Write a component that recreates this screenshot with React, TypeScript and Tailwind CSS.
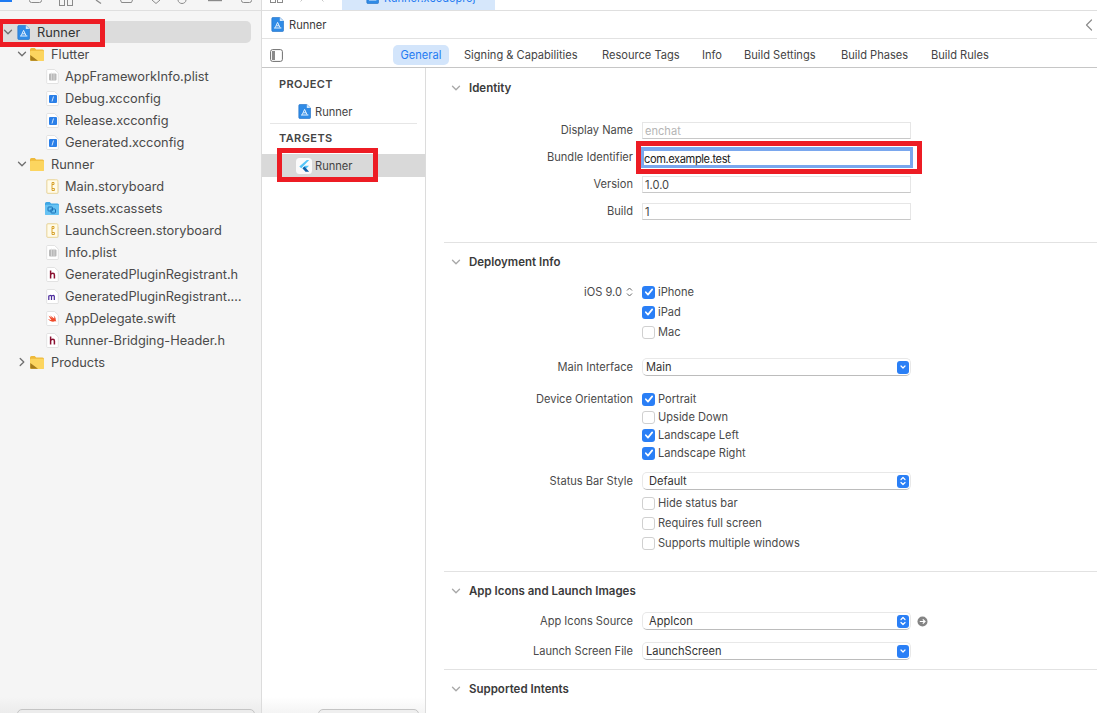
import React from "react";

const Chevron = ({ open = true, className = "" }: { open?: boolean; className?: string }) => (
  <svg width="10" height="10" viewBox="0 0 10 10" fill="none" className={className}>
    {open ? (
      <path d="M1.500 3.200 5 6.800 8.500 3.200" stroke="#6f6f6f" strokeWidth="1.300" strokeLinecap="round" strokeLinejoin="round" />
    ) : (
      <path d="M3.200 1.500 6.800 5 3.200 8.500" stroke="#6f6f6f" strokeWidth="1.300" strokeLinecap="round" strokeLinejoin="round" />
    )}
  </svg>
);

const Folder = ({ alias = false, blue = false }: { alias?: boolean; blue?: boolean }) => (
  <svg width="16" height="15" viewBox="0 0 16 15">
    <path d="M1 2.500A1.500 1.500 0 0 1 2.500 1h3.200L7.200 2.500h6.300A1.500 1.500 0 0 1 15 4v8.500a1.500 1.500 0 0 1-1.500 1.500h-11A1.500 1.500 0 0 1 1 12.500z" fill={blue ? "#3fa6e4" : "#eeb93a"} />
    <rect x="1" y="3.800" width="14" height="10.200" rx="1.400" fill={blue ? "#66c2f3" : "#fcd55f"} />
    {alias && <path d="M1.300 8 9 13.800H2.400a1.100 1.100 0 0 1-1.100-1.100z" fill="#a57b1b" />}
    {blue && (
      <g fill="none" stroke="#1a6fb5" strokeWidth="1">
        <rect x="4" y="6" width="4.500" height="4" rx="0.700" />
        <rect x="7" y="8" width="4.500" height="4" rx="0.700" />
      </g>
    )}
  </svg>
);

const Doc = ({ children }: { children?: React.ReactNode }) => (
  <svg width="13" height="15" viewBox="0 0 13 15">
    <path d="M.7 1.500a1 1 0 0 1 1-1h6.800l3.800 3.600v9.400a1 1 0 0 1-1 1H1.700a1 1 0 0 1-1-1z" fill="#fff" stroke="#dcdcdc" strokeWidth="0.800" />
    {children}
  </svg>
);

const Plist = () => (
  <Doc>
    <rect x="3" y="4.500" width="7.500" height="7" rx="1" fill="#b9b9b9" />
    <path d="M5.500 3.500v8M8 3.500v8" stroke="#e2e2e2" strokeWidth="0.700" />
  </Doc>
);
const Config = () => (
  <Doc>
    <rect x="3" y="4" width="8" height="8" rx="1" fill="#2a7fe8" />
    <path d="M7.500 5.500 6 10.500" stroke="#d4e6fb" strokeWidth="1" />
  </Doc>
);
const Story = () => (
  <Doc>
    <rect x="0.900" y="0.800" width="11" height="13.500" rx="1" fill="#fffbe9" stroke="#ecd284" strokeWidth="0.800" />
    <path d="M6 3.500h2v2H6zM6 5.500v4M6 9.500h2.400v2H6z" fill="none" stroke="#d49a1c" strokeWidth="0.900" />
  </Doc>
);
const Header = () => (
  <Doc>
    <path d="M4.600 3.500v8M4.600 7.600c.6-1 1.400-1.300 2.200-1.300 1 0 1.600.6 1.600 1.700v3.500" fill="none" stroke="#8b1030" strokeWidth="1.500" />
  </Doc>
);
const Impl = () => (
  <Doc>
    <path d="M2.800 11V6.400M2.800 7.300c.6-1 2.400-1.200 2.700 0V11M5.500 7.300c.6-1 2.500-1.200 2.800 0V11" fill="none" stroke="#4a2a9c" strokeWidth="1.200" />
  </Doc>
);
const Swift = () => (
  <Doc>
    <path d="M2.500 4.500c1.600 1.400 3 2.400 4.400 3.300C5.500 6.400 4.500 5.200 3.900 4.200c1.600 1.300 3.400 2.600 4.400 3.200.2-.9-.1-2-.8-3 1.700 1.200 2.600 3.200 2.200 4.600.5.700.6 1.200.5 1.700-.4-.5-.9-.6-1.400-.4-1.600.8-4.800.4-6.800-2.200.9.5 2.300 1 3.400.8C4.500 7.800 3.400 6.100 2.500 4.500z" fill="#ef4a2a" />
  </Doc>
);

const ProjectIcon = () => (
  <svg width="13" height="15" viewBox="0 0 13 15">
    <path d="M.8 1.500a1 1 0 0 1 1-1h7L12.500 4v9.500a1 1 0 0 1-1 1H1.800a1 1 0 0 1-1-1z" fill="#2f8be6" stroke="#1c6cc4" strokeWidth="0.600" />
    <path d="M8.800.5V4h3.700z" fill="#d4e8fb" />
    <path d="M3 11h7.400M4.200 10.700 6.600 5.400l2.500 5.300M5.400 8.800h2.600" fill="none" stroke="#e6f2fe" strokeWidth="1" />
  </svg>
);

const FlutterIcon = () => (
  <svg width="16" height="16" viewBox="0 0 16 16">
    <rect width="16" height="16" rx="3.500" fill="#fafafa" />
    <path d="M10.800 2 3.300 8.400l2 1.900L13.200 2z" fill="#54c5f8" />
    <path d="M13 7.800H9.300L6.500 10.300l2 1.900z" fill="#54c5f8" />
    <path d="M6.500 10.300l2-1.900 4.600 5.400H9.500z" fill="#0f5fa8" />
  </svg>
);

type Item = { name: string; level: 0 | 1 | 2; icon: React.ReactNode; chevron?: "open" | "closed"; selected?: boolean };

const tree: Item[] = [
  { name: "Runner", level: 0, icon: <ProjectIcon />, chevron: "open", selected: true },
  { name: "Flutter", level: 1, icon: <Folder alias />, chevron: "open" },
  { name: "AppFrameworkInfo.plist", level: 2, icon: <Plist /> },
  { name: "Debug.xcconfig", level: 2, icon: <Config /> },
  { name: "Release.xcconfig", level: 2, icon: <Config /> },
  { name: "Generated.xcconfig", level: 2, icon: <Config /> },
  { name: "Runner", level: 1, icon: <Folder />, chevron: "open" },
  { name: "Main.storyboard", level: 2, icon: <Story /> },
  { name: "Assets.xcassets", level: 2, icon: <Folder blue /> },
  { name: "LaunchScreen.storyboard", level: 2, icon: <Story /> },
  { name: "Info.plist", level: 2, icon: <Plist /> },
  { name: "GeneratedPluginRegistrant.h", level: 2, icon: <Header /> },
  { name: "GeneratedPluginRegistrant.…", level: 2, icon: <Impl /> },
  { name: "AppDelegate.swift", level: 2, icon: <Swift /> },
  { name: "Runner-Bridging-Header.h", level: 2, icon: <Header /> },
  { name: "Products", level: 1, icon: <Folder alias />, chevron: "closed" },
];

const TreeRow = ({ item }: { item: Item }) => {
  const indent = item.level === 0 ? "pl-[3px]" : item.level === 1 ? "pl-[17px]" : "pl-[44px]";
  return (
    <div className={`flex h-[22px] items-center ${indent} ${item.selected ? "rounded-[5px] bg-[#dcdcdc] text-[#333]" : ""}`}>
      {item.chevron && (
        <span className="flex w-[12px] shrink-0 items-center">
          <Chevron open={item.chevron === "open"} />
        </span>
      )}
      <span className="flex w-[16px] shrink-0 items-center justify-center">{item.icon}</span>
      <span className={`whitespace-nowrap pt-[2px] ${item.level === 2 ? "ml-[5px]" : "ml-[6px]"}`}>{item.name}</span>
    </div>
  );
};

const Sidebar = () => (
  <aside className="relative flex w-[262px] shrink-0 flex-col overflow-hidden border-r border-[#dcdcdc] bg-[#f5f5f5] text-[12.800px] text-[#4a4a4a]">
    <svg width="261" height="10" viewBox="0 0 261 10" fill="none" className="shrink-0" stroke="#8a8a8a" strokeWidth="1">
      <rect x="0" y="0" width="12" height="2" fill="#1f7bf2" stroke="none" />
      <rect x="29.500" y="-8" width="12" height="10.500" rx="2" />
      <rect x="59.500" y="-6" width="5" height="11.500" />
      <rect x="67.500" y="-6" width="5" height="11.500" />
      <path d="M96 0l5 3.500" strokeWidth="1.300" />
      <path d="M120.500 0l1 2.500h10l1-2.500" />
      <path d="M152 0l4 3.500 4-3.500" />
      <path d="M178 0c0 2 2 3.500 4 3.500s4-1.500 4-3.500" />
      <path d="M208 .5h14" strokeWidth="1.400" />
      <rect x="241.500" y="-8" width="10" height="10.500" rx="2" />
    </svg>
    <div className="h-px shrink-0 bg-[#dfdfdf]" />
    <div className="mr-[10px] mt-[10px] flex flex-col">
      {tree.map((item, i) => (
        <TreeRow key={i} item={item} />
      ))}
    </div>
    <div className="absolute bottom-0 left-0 right-0 h-[16px] bg-gradient-to-b from-[#f5f5f5] to-[#ececec]" />
    <div className="absolute bottom-[-12px] left-[17px] h-[16px] w-[238px] rounded-[5px] border border-[#c4c4c4] bg-[#ececec]" />
    <div className="pointer-events-none absolute left-0 top-[19px] h-[28px] w-[105px] border-y-[5px] border-l-[3px] border-r-[5px] border-[#ed1c24]" />
  </aside>
);

const TopStrip = () => (
  <div className="flex h-[10px] shrink-0 overflow-hidden bg-white">
    <svg width="80" height="10" viewBox="0 0 80 10" fill="none" className="shrink-0">
      <rect x="8.500" y="-6" width="5" height="8.500" stroke="#8a8a8a" />
      <rect x="15.500" y="-6" width="5" height="8.500" stroke="#8a8a8a" />
      <path d="M40 0l-1.500 1.500M60 0l1.500 1.500" stroke="#c8c8c8" />
    </svg>
    <div className="flex w-[153px] items-start overflow-hidden bg-[#d6e7fb] pl-[24px]">
      <span className="mt-[-11px] flex shrink-0">
        <ProjectIcon />
      </span>
      <span className="ml-[5px] mt-[-7px] whitespace-nowrap text-[11px] leading-[10px] text-[#1f7bf2]">Runner.xcodeproj</span>
    </div>
  </div>
);

const tabs = [
  { label: "Signing & Capabilities", w: "w-[138px]" },
  { label: "Resource Tags", w: "w-[100px]" },
  { label: "Info", w: "w-[42px]" },
  { label: "Build Settings", w: "w-[97px]" },
  { label: "Build Phases", w: "w-[90px]" },
  { label: "Build Rules", w: "w-[80px]" },
];

const TabBar = () => (
  <div className="flex h-[29px] shrink-0 items-center border-b border-[#c6c6c6] pl-[8px] pt-[4px]">
    <svg width="13" height="13" viewBox="0 0 13 13" fill="none" className="shrink-0">
      <rect x="0.600" y="0.600" width="11.800" height="11.800" rx="2" stroke="#6e6e6e" />
      <rect x="2" y="2" width="3" height="9" fill="#8a8a8a" />
    </svg>
    <div className="ml-[110px] flex h-[20px] w-[56px] items-center justify-center rounded-[5px] bg-[#d3e5fb] text-[#1f7bf2]">General</div>
    <div className="ml-[15px] flex">
      {tabs.map((t) => (
        <div key={t.label} className={`${t.w} whitespace-nowrap`}>
          {t.label}
        </div>
      ))}
    </div>
  </div>
);

const ProjectPane = () => (
  <div className="relative flex w-[164px] shrink-0 flex-col border-r border-[#dcdcdc]">
    <div className="ml-[17px] mt-[9px] text-[11px] font-semibold leading-[14px] tracking-[0.4px] text-[#444]">PROJECT</div>
    <div className="mt-[13px] flex h-[15px] items-center pl-[36px]">
      <ProjectIcon />
      <span className="ml-[4px] pt-[2px]">Runner</span>
    </div>
    <div className="mx-[8px] mt-[4px] h-px bg-[#e6e6e6]" />
    <div className="ml-[17px] mt-[7px] text-[11px] font-semibold leading-[14px] tracking-[0.4px] text-[#444]">TARGETS</div>
    <div className="mt-[9px] flex h-[23px] items-center bg-[#d9d9d9] pl-[34px]">
      <FlutterIcon />
      <span className="ml-[3px] pt-[2px]">Runner</span>
    </div>
    <div className="pointer-events-none absolute left-[15px] top-[80px] h-[34px] w-[101px] border-[5px] border-[#ed1c24]" />
    <div className="absolute bottom-0 left-0 right-0 h-[16px] bg-gradient-to-b from-white to-[#f4f4f4]" />
    <div className="absolute bottom-[-12px] left-[56px] h-[16px] w-[101px] rounded-[5px] border border-[#c4c4c4] bg-[#efefef]" />
  </div>
);

const SectionTitle = ({ children, className = "" }: { children: React.ReactNode; className?: string }) => (
  <div className={`flex h-[16px] items-center pl-[7px] ${className}`}>
    <Chevron className="shrink-0 opacity-60" />
    <span className="ml-[8px] pt-[2px] text-[11.500px] font-semibold text-[#3a3a3a]">{children}</span>
  </div>
);

const Label = ({ children }: { children?: React.ReactNode }) => (
  <div className="w-[189px] shrink-0 whitespace-nowrap text-right text-[#4a4a4a]">{children}</div>
);

const Field = ({ label, value, muted = false }: { label: string; value: string; muted?: boolean }) => (
  <div className="flex h-[17px] items-center">
    <Label>{label}</Label>
    <div className={`ml-[9px] flex h-[17px] w-[269px] items-center border border-[#e6e6e6] border-b-[#c8c8c8] pl-[2px] pt-[1px] ${muted ? "text-[#b5b5b5]" : "text-[#444]"}`}>
      {value}
    </div>
  </div>
);

const Check = ({ label, checked = false, h = "h-[20px]" }: { label: string; checked?: boolean; h?: string }) => (
  <div className={`flex items-center ${h}`}>
    <span className={`flex h-[13px] w-[13px] shrink-0 items-center justify-center rounded-[3px] ${checked ? "bg-[#2a7ff6]" : "border border-[#d0d0d0] bg-white"}`}>
      {checked && (
        <svg width="10" height="10" viewBox="0 0 10 10" fill="none">
          <path d="M1.800 5.200 4 7.600 8.200 2.400" stroke="#fff" strokeWidth="1.700" strokeLinecap="round" strokeLinejoin="round" />
        </svg>
      )}
    </span>
    <span className="ml-[3px] whitespace-nowrap text-[#4a4a4a]">{label}</span>
  </div>
);

const Select = ({ label, value, updown = false, arrow = false }: { label: string; value: string; updown?: boolean; arrow?: boolean }) => (
  <div className="flex h-[18px] items-center">
    <Label>{label}</Label>
    <div className={`ml-[9px] flex h-[18px] w-[269px] items-center justify-between rounded-[5px] border border-[#e8e8e8] border-b-[#bcbcbc] bg-white pr-[1px] text-[#333] ${updown ? "pl-[6px]" : "pl-[3px]"}`}>
      <span>{value}</span>
      <span className="flex h-[13px] w-[12px] items-center justify-center rounded-[3px] bg-[#2a7ff6]">
        <svg width="8" height="12" viewBox="0 0 8 12" fill="none" stroke="#fff" strokeWidth="1.200" strokeLinecap="round" strokeLinejoin="round">
          {updown ? <path d="M2 4.500 4 2.500l2 2M2 7.500l2 2 2-2" /> : <path d="M2 5l2 2 2-2" />}
        </svg>
      </span>
    </div>
    {arrow && (
      <svg width="11" height="11" viewBox="0 0 11 11" className="ml-[6px] shrink-0">
        <circle cx="5.500" cy="5.500" r="5" fill="#848484" />
        <path d="M2.800 5.500h5M5.800 3.300l2.200 2.200-2.200 2.200" fill="none" stroke="#fff" strokeWidth="1.200" />
      </svg>
    )}
  </div>
);

const Divider = ({ className }: { className: string }) => <div className={`h-px bg-[#e2e2e2] ${className}`} />;

const Editor = () => (
  <div className="relative min-w-0 flex-1 overflow-hidden pl-[18px] text-[#4a4a4a]">
    <SectionTitle className="mt-[12px]">Identity</SectionTitle>
    <div className="mt-[26px] flex flex-col">
      <Field label="Display Name" value="enchat" muted />
      <div className="mt-[10px] flex h-[17px] items-center">
        <Label>Bundle Identifier</Label>
        <div className="relative ml-[9px] flex h-[17px] w-[269px] items-center pl-[2px] pt-[3px] tracking-[-0.4px] text-[#222]">
          <span className="absolute bottom-[-2px] left-[-1px] right-[-2px] top-[-2px] border-[3px] border-t-[4px] border-[#7aa7ee]" />
          <span className="relative">com.example.test</span>
        </div>
      </div>
      <div className="mt-[10px]">
        <Field label="Version" value="1.0.0" />
      </div>
      <div className="mt-[10px]">
        <Field label="Build" value="1" />
      </div>
    </div>
    <Divider className="mt-[22px]" />
    <SectionTitle className="mt-[11px]">Deployment Info</SectionTitle>
    <div className="mt-[12px] flex">
      <div className="flex h-[20px] w-[189px] shrink-0 items-center justify-end">
        <span>iOS 9.0</span>
        <svg width="7" height="10" viewBox="0 0 7 10" fill="none" stroke="#666" strokeWidth="1" className="ml-[4px]">
          <path d="M1 3.500 3.500 1 6 3.500M1 6.500 3.500 9 6 6.500" />
        </svg>
      </div>
      <div className="ml-[9px] flex flex-col">
        <Check label="iPhone" checked />
        <Check label="iPad" checked />
        <Check label="Mac" />
      </div>
    </div>
    <div className="mt-[16px]">
      <Select label="Main Interface" value="Main" />
    </div>
    <div className="mt-[14px] flex">
      <div className="flex h-[18px] shrink-0 items-center">
        <Label>Device Orientation</Label>
      </div>
      <div className="ml-[9px] flex flex-col">
        <Check label="Portrait" checked h="h-[18px]" />
        <Check label="Upside Down" h="h-[18px]" />
        <Check label="Landscape Left" checked h="h-[18px]" />
        <Check label="Landscape Right" checked h="h-[18px]" />
      </div>
    </div>
    <div className="mt-[10px]">
      <Select label="Status Bar Style" value="Default" updown />
    </div>
    <div className="ml-[198px] mt-[3px] flex flex-col">
      <Check label="Hide status bar" />
      <Check label="Requires full screen" />
      <Check label="Supports multiple windows" />
    </div>
    <Divider className="mt-[18px]" />
    <SectionTitle className="mt-[11px]">App Icons and Launch Images</SectionTitle>
    <div className="mt-[13px]">
      <Select label="App Icons Source" value="AppIcon" updown arrow />
    </div>
    <div className="mt-[12px]">
      <Select label="Launch Screen File" value="LaunchScreen" />
    </div>
    <Divider className="mt-[9px]" />
    <SectionTitle className="mt-[11px]">Supported Intents</SectionTitle>
    <div className="pointer-events-none absolute left-[210px] top-[73px] h-[33px] w-[286px] border-[5px] border-[#ed1c24]" />
  </div>
);

export default function App() {
  return (
    <div className="flex h-[713px] w-[1097px] overflow-hidden bg-white font-['Inter',sans-serif] text-[11.100px] text-[#444]">
      <Sidebar />
      <main className="flex min-w-0 flex-1 flex-col">
        <TopStrip />
        <div className="h-px shrink-0 bg-[#dfdfdf]" />
        <div className="flex h-[28px] shrink-0 items-center justify-between border-b border-[#e2e2e2] pl-[9px] pr-[4px] pt-[1px]">
          <div className="flex items-center">
            <ProjectIcon />
            <span className="ml-[5px] pt-[1px] text-[#3a3a3a]">Runner</span>
          </div>
          <svg width="8" height="12" viewBox="0 0 8 12" fill="none">
            <path d="M6.500 1 1.500 6l5 5" stroke="#8c8c8c" strokeWidth="1.200" strokeLinecap="round" strokeLinejoin="round" />
          </svg>
        </div>
        <TabBar />
        <div className="flex min-h-0 flex-1">
          <ProjectPane />
          <Editor />
        </div>
      </main>
    </div>
  );
}
